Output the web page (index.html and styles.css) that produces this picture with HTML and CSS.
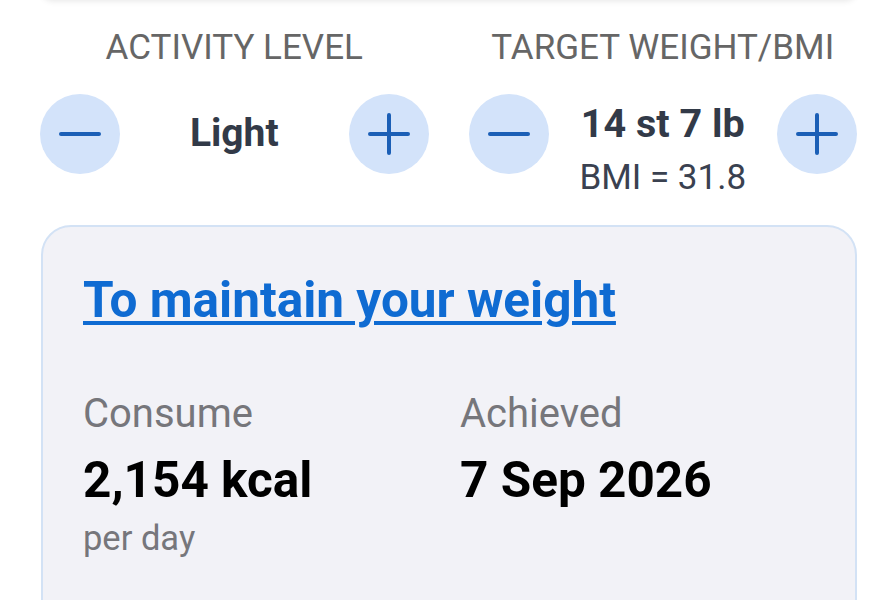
FILE: index.html
```html
<!DOCTYPE html>
<html lang="en">
<head>
<meta charset="utf-8">
<title>Calorie goal</title>
<link rel="stylesheet" href="styles.css">
</head>
<body>
<div class="prev-card"></div>

<section class="controls">
  <div class="control">
    <div class="label">ACTIVITY LEVEL</div>
    <div class="stepper">
      <button class="step" aria-label="Decrease">
        <svg viewBox="0 0 80 80" width="80" height="80"><path d="M21 40H59" /></svg>
      </button>
      <div class="value value-single">Light</div>
      <button class="step" aria-label="Increase">
        <svg viewBox="0 0 80 80" width="80" height="80"><path d="M21 40H59M40 21V59" /></svg>
      </button>
    </div>
  </div>
  <div class="control">
    <div class="label">TARGET WEIGHT/BMI</div>
    <div class="stepper">
      <button class="step" aria-label="Decrease">
        <svg viewBox="0 0 80 80" width="80" height="80"><path d="M21 40H59" /></svg>
      </button>
      <div class="value value-double">
        <div class="value-main">14 st 7 lb</div>
        <div class="value-sub">BMI = 31.8</div>
      </div>
      <button class="step" aria-label="Increase">
        <svg viewBox="0 0 80 80" width="80" height="80"><path d="M21 40H59M40 21V59" /></svg>
      </button>
    </div>
  </div>
</section>

<section class="card">
  <a class="card-title" href="#">To maintain your weight</a>
  <div class="stats">
    <div class="stat">
      <div class="stat-label">Consume</div>
      <div class="stat-value">2,154 kcal</div>
      <div class="stat-note">per day</div>
    </div>
    <div class="stat">
      <div class="stat-label">Achieved</div>
      <div class="stat-value">7 Sep 2026</div>
    </div>
  </div>
</section>
</body>
</html>
```

FILE: styles.css
```css
* { box-sizing: border-box; }

html, body {
  margin: 0;
  padding: 0;
  background: #ffffff;
  font-family: Roboto, "Noto Sans", "Liberation Sans", sans-serif;
  overflow: hidden;
}

.prev-card {
  height: 12px;
  margin: -12px 36px 0 41px;
  border-radius: 0 0 28px 28px;
  background: #ffffff;
  box-shadow: 0 1px 6px rgba(0, 0, 0, 0.10);
}

.controls {
  display: grid;
  grid-template-columns: 1fr 1fr;
  column-gap: 40px;
  padding: 28px 36px 0 40px;
}

.label {
  font-size: 35px;
  line-height: 40px;
  color: #666666;
  text-align: center;
  white-space: nowrap;
}

.stepper {
  display: flex;
  align-items: flex-start;
  margin-top: 26px;
}

.step {
  flex: none;
  width: 80px;
  height: 80px;
  padding: 0;
  border: none;
  border-radius: 50%;
  background: #d3e3fa;
  display: flex;
  align-items: center;
  justify-content: center;
}

.step svg {
  display: block;
  fill: none;
  stroke: #1b5fb6;
  stroke-width: 4;
  stroke-linecap: round;
}

.value {
  flex: 1;
  text-align: center;
  color: #323a48;
  white-space: nowrap;
}

.value-single {
  margin-top: 16px;
  font-size: 39px;
  line-height: 46px;
  font-weight: 700;
}

.value-double {
  margin-top: 7px;
}

.value-main {
  font-size: 39.5px;
  line-height: 46px;
  font-weight: 700;
}

.value-sub {
  margin-top: 11px;
  font-size: 35px;
  line-height: 40px;
  color: #3a4150;
}

.card {
  margin: 27px 36px 0 41px;
  padding: 45px 40px 60px 40px;
  min-height: 420px;
  background: #f2f2f7;
  border: 2px solid #d3e2f5;
  border-radius: 30px;
}

.card-title {
  display: inline-block;
  font-size: 49.5px;
  line-height: 56px;
  font-weight: 700;
  color: #0f6bd2;
  text-decoration: underline;
  text-decoration-thickness: 3.5px;
  text-underline-offset: 4px;
  white-space: nowrap;
}

.stats {
  display: grid;
  grid-template-columns: 1fr 1fr;
  column-gap: 22px;
  margin-top: 63px;
}

.stat-label {
  font-size: 40px;
  line-height: 46px;
  color: #76767b;
}

.stat-value {
  margin-top: 15px;
  font-size: 49.5px;
  line-height: 56px;
  font-weight: 700;
  color: #000000;
  white-space: nowrap;
}

.stat-note {
  margin-top: 10px;
  font-size: 34.5px;
  line-height: 40px;
  color: #76767b;
}
```
